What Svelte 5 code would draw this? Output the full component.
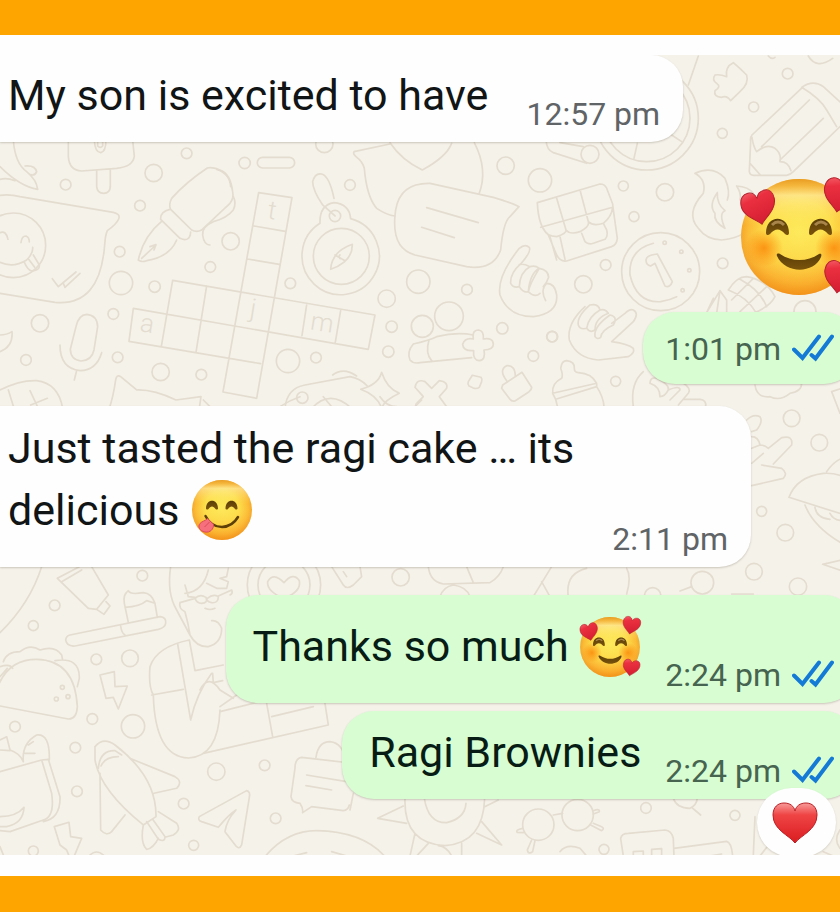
<script lang="ts">
	type Sheet = {
		x: number;
		y: number;
		dots: number[][];
		lines: string[];
	};

	// wallpaper doodles, drawn at three units per pixel
	const sheets: Sheet[] = [
		{
			x: 0,
			y: 150,
			dots: [
				[461, 69, 26], [197, 104, 16], [560, 10, 16], [420, 167, 16], [359, 305, 16],
				[363, 399, 35], [464, 410, 17], [340, 492, 16], [120, 520, 26], [78, 630, 16],
				[353, 622, 16], [482, 666, 26], [604, 674, 16], [692, 274, 26], [631, 351, 16],
				[734, 39, 17], [40, 286, 97]
			],
			lines: [
				// lolly
				'M205,-30V20Q208,62 245,63L350,55Q400,50 403,18L398,-30M290,60V110Q292,130 311,130Q330,130 331,110V58M283,-30Q285,7 302,8Q318,5 318,-30M293,-30V-12Q301,-4 308,-12V-30',
				// banana
				'M40,-30Q45,40 80,65Q110,90 113,118Q60,110 0,50M75,48Q105,45 110,65Q105,78 92,74M0,88Q20,82 45,92',
				// speech bubble with a face
				'M0,136Q30,132 60,140L340,187Q362,192 356,207Q350,222 322,242Q316,255 314,285Q300,470 165,457L0,430',
				'M0,337Q40,355 80,330Q100,310 98,292M0,248Q18,240 24,268M63,278Q65,258 78,258Q88,262 88,276M72,335Q85,365 98,363Q120,360 118,345L100,315M86,328L104,352',
				'M157,386L175,410L228,366M190,400L195,412L240,370',
				// fountain pen
				'M622,54Q560,95 515,145Q505,165 512,178L575,240Q590,248 605,240L690,160Q702,145 698,125Q692,75 665,62Q640,50 622,54Z',
				'M510,178Q480,185 482,208L540,265Q570,278 572,246M484,215Q430,260 415,330Q425,338 440,332Q510,320 530,270M425,325L468,285M450,290L468,284L462,300',
				'M650,58Q690,70 692,110M700,140Q710,160 700,180Q680,205 640,215Q605,230 608,255Q612,285 630,285',
				'M788,22H868A16,16 0 0 1 868,54H788A16,16 0 0 1 788,22Z',
				// crossword
				'M776,128L669,726L770,745L876,143ZM762,228L856,244M742,327L838,343M518,391L1125,495L1105,598L400,475L387,574L782,641M518,391L484,590M620,408L588,607M920,465L906,557M1022,482L1006,577',
				// microphone
				'M228,530Q235,495 260,493Q292,496 293,530L282,600Q275,632 243,633Q212,630 211,598ZM180,585Q180,655 240,662Q290,660 305,608M230,662L223,690',
				'M0,605Q40,590 36,545Q20,555 0,555',
				'M0,720Q60,690 110,692Q175,700 188,775M25,720L42,775M90,722L115,775M92,765L142,745',
				'M328,775Q340,740 347,690Q350,672 362,680L410,720Q460,718 528,750L603,740L598,775'
			]
		},
		{
			x: 280,
			y: 140,
			dots: [
				[133, 12, 26], [184, 349, 84], [165, 228, 17], [427, 559, 33], [507, 529, 43],
				[415, 425, 35], [320, 476, 26], [561, 449, 16], [335, 560, 17], [325, 635, 17],
				[31, 430, 16], [24, 663, 35], [108, 653, 16], [210, 135, 16], [677, 77, 26],
				[780, 121, 35], [667, 565, 17], [816, 590, 16], [760, 648, 16], [67, 773, 17]
			],
			lines: [
				// compass
				'M120,250Q118,195 162,188Q208,192 212,236M120,250A116,116 0 1 0 212,236M128,195Q98,150 98,125Q105,98 125,102Q148,108 162,175M128,195L165,228M152,388Q155,335 217,313Q218,365 152,388ZM165,345L195,362M180,345A6,6 0 0 0 184,356',
				// two speech bubbles
				'M330,12L222,35Q218,40 228,50Q248,65 253,85Q260,170 290,205Q320,225 345,228M330,8Q365,60 427,90Q500,50 515,10M583,8Q625,90 597,162',
				'M450,130Q360,128 347,210Q330,325 405,345L560,380Q640,392 662,330Q670,245 690,230L717,200Q700,190 640,172ZM440,203L595,248M425,262L523,293',
				// pointing hand
				'M722,372Q755,335 748,322Q735,310 718,325Q650,410 660,465Q685,530 760,530Q835,520 830,465Q825,430 800,430Q780,450 797,482M722,372Q690,400 692,430Q700,445 718,440Q720,395 750,380Q730,370 718,374M718,440Q730,460 745,455Q750,400 778,385Q765,375 750,380M745,455Q765,475 780,460M745,455Q750,430 778,385Q805,390 806,412Q800,430 790,440',
				'M400,612Q380,635 390,660Q400,672 420,668L575,653M400,612Q450,600 470,590Q530,575 580,585M447,600Q435,640 455,662',
				'M580,597Q575,570 596,570Q612,572 610,597Q640,592 640,613Q640,630 612,630Q618,660 598,662Q578,660 581,632Q550,634 548,613Q555,592 580,597Z',
				// camera
				'M15,805Q20,745 75,735L210,710Q240,715 262,738M158,705Q190,680 230,708M95,805Q150,745 215,805',
				'M305,697Q320,745 358,760Q315,780 305,803Q290,765 242,748Q295,735 305,697Z',
				'M430,770L405,742Q410,715 435,725L455,745L478,722Q505,725 500,745L478,770L500,800M430,770L408,792V805',
				'M577,706L603,712Q608,718 605,725L598,742Q590,748 580,744L567,738Q562,732 565,725Z',
				'M668,735L726,697L755,742Q755,750 745,757L705,783Q695,785 690,778L665,745ZM680,722Q655,690 680,677Q705,675 706,708'
			]
		},
		{
			x: 540,
			y: 50,
			dots: [
				[743, 71, 16], [641, 171, 15], [547, 250, 15], [250, 408, 15], [375, 427, 26],
				[282, 500, 15], [197, 645, 16], [130, 703, 26], [37, 860, 16], [548, 640, 16],
				[227, 994, 15], [320, 205, 155], [320, 205, 130], [150, 313, 27], [362, 665, 117],
				[795, 785, 33], [374, 578, 5], [424, 605, 5], [448, 661, 5], [428, 721, 5]
			],
			lines: [
				'M292,280L282,325M395,255L425,275M475,18L445,105M18,270Q20,300 40,308L140,340M60,278L130,290',
				// shop
				'M-8,458L180,402Q195,402 200,415L218,462L220,480L232,565Q230,585 215,590L80,633Q60,636 50,615L25,555Q-5,530 -8,458ZM2,532L218,472M50,445L78,540M120,420L145,515M10,535Q20,560 50,560Q80,550 78,540Q90,555 120,545Q150,530 145,515Q160,530 190,520Q215,500 218,472M30,560L50,630M60,560L75,628M125,550L135,575Q145,585 160,580L195,568Q205,558 200,540L190,520',
				// flame
				'M465,370Q520,345 555,385Q572,425 562,450M465,370Q500,390 490,430Q435,490 475,535Q500,570 545,570Q590,565 610,550M532,428Q530,462 555,482Q535,490 555,535Q520,515 525,490Q505,465 532,428M590,408Q625,410 640,430M590,408Q605,430 600,450',
				// jigsaw piece
				'M580,38Q600,55 620,75Q628,100 600,125L572,152Q560,135 545,142Q520,140 525,122Q545,110 530,100Q515,90 525,75Q540,72 560,80Q555,50 580,38Z',
				// pencil
				'M790,110L636,255Q630,262 632,275L628,365Q630,376 640,376H740Q750,375 760,365L905,225M785,112Q820,88 850,110L905,160M785,112Q840,145 860,180L890,230M808,150L665,290M850,205L720,330M636,262Q640,290 650,305Q680,280 705,295Q725,310 720,335Q745,335 753,362M630,340L662,376',
				// coin
				'M340,580Q265,600 270,675Q290,760 362,755Q390,750 410,740M318,630Q320,615 352,612L397,695Q390,715 375,708L345,640L332,648Q318,645 318,630Z',
				// waving hand
				'M135,770Q80,820 88,870Q110,925 175,930L265,920Q285,910 280,895Q265,882 215,875L280,815Q298,790 280,780Q270,775 255,790L215,820M115,825Q110,800 150,765Q175,760 180,780Q145,800 140,835Q120,840 115,825M140,835Q150,850 165,840Q165,805 205,790Q195,775 180,780M165,860Q160,830 210,795Q235,800 220,825Q185,840 182,862Q172,870 165,860',
				// baby bottle
				'M38,1030Q35,1000 65,985Q70,975 62,955Q65,932 80,932Q105,935 103,955Q103,968 115,968Q155,970 170,1000ZM38,1030L47,1048L170,1010V1000M47,1048L52,1068M170,1010Q190,1040 192,1070',
				'M280,1070Q270,1000 310,965M330,1000Q330,980 350,985Q390,1005 385,1020Q375,1040 360,1040Q360,1010 330,1000M385,1020Q420,1005 420,1020L390,1050M430,1000Q455,1015 445,1030L415,1065M430,1048L480,1048Q500,1050 497,1070',
				'M645,1005Q650,1045 690,1040Q720,1055 750,1030Q785,1025 785,1000M875,1025L905,1015M875,1025L900,1090',
				// pineapple
				'M565,720Q590,680 620,680Q680,690 705,740Q690,770 640,790M500,788L540,722L560,750V790M500,788L520,745M540,722L530,790M575,750L640,685M600,785L680,710M565,720Q620,740 650,790M600,688Q660,720 680,770',
				'M685,18Q695,30 705,22M805,18Q830,60 878,25'
			]
		},
		{
			x: 0,
			y: 560,
			dots: [
				[427, 47, 16], [164, 136, 16], [100, 197, 15], [289, 298, 16], [390, 295, 25],
				[399, 499, 35], [277, 477, 16], [45, 500, 16], [226, 563, 16], [231, 694, 16],
				[649, 635, 26], [794, 616, 16], [551, 731, 16], [827, 775, 16], [581, 856, 15],
				[100, 873, 15], [187, 382, 6], [169, 417, 6], [204, 410, 6], [852, 75, 110], [852, 75, 78]
			],
			lines: [
				'M125,20Q90,130 0,218',
				// tube and toothbrush
				'M172,55L238,20M172,55L265,145L290,148L325,105L275,20M185,65L245,30M290,148L312,163L330,138L318,125',
				'M210,225L480,170Q500,172 497,190Q495,203 475,208L225,258Q200,260 197,240Q198,228 210,225ZM362,198Q365,220 375,225M385,187L373,130Q368,105 385,92Q390,105 430,98Q455,100 465,130L472,172M375,142Q420,140 440,122L465,130',
				// taco
				'M-10,390Q20,298 110,298Q225,300 232,440Q230,478 205,477L0,438M10,305Q20,275 60,275Q90,250 120,270Q165,255 185,285L188,300M165,302Q240,290 238,355L232,380M0,320Q30,310 38,325M0,350L22,325',
				'M300,345L343,335L345,380L382,378L355,447L340,412L318,415Z',
				// man in a suit
				'M512,20Q500,100 530,150L570,225M555,75L565,110L585,112M555,100Q610,95 625,30M620,70L650,85H680L685,65L660,55L680,50L685,25M540,128Q535,145 555,155Q565,190 570,225Q590,262 625,260Q665,250 665,205Q655,180 635,182M540,128L585,115Q600,100 618,112Q625,130 605,130Q590,130 585,115M622,115Q640,100 655,110Q655,130 635,128Q620,125 618,112M655,108L695,90Q700,100 690,105M615,145Q630,152 645,145',
				'M568,240Q470,260 450,320Q445,380 460,405Q465,590 565,594Q655,590 660,450M455,405L550,388M533,252L572,480Q590,400 635,340M568,240L585,332L670,315M600,390Q625,340 660,390L700,415M660,440L710,405M610,580L985,495L975,430M800,430L818,530M815,470L940,440M638,340L640,368L668,362M660,455L780,425',
				'M852,115Q800,95 803,65Q820,35 852,68Q880,35 898,62Q905,95 852,115Z',
				// grocery bag
				'M0,635L125,600L155,700Q165,770 130,780L30,815L0,812M125,600L145,598L180,710Q182,775 130,785M70,605Q65,550 110,525Q150,520 148,600M75,580L105,580M85,555L100,545M0,540L20,530L30,570Q60,580 70,605M0,570L30,572M0,770Q50,770 72,742Q70,790 20,800L0,800',
				// rocket
				'M285,560Q310,530 345,555Q470,650 468,770L430,795Q300,690 285,600ZM295,625Q300,570 345,572L365,585M303,618Q315,590 355,590M395,597L525,650Q550,665 530,685L462,700M300,640L302,810Q320,830 335,815L375,765M430,795Q420,850 440,868Q460,865 475,835M440,785L475,838Q495,848 495,830L458,778M475,755L530,790Q545,810 520,825L495,832',
				'M598,770L740,692Q752,695 748,712L725,855Q718,870 708,858L675,815Q680,780 708,750Q685,765 655,802L605,785Q592,780 598,770Z',
				'M1060,610L905,592Q885,595 885,625L873,710Q875,728 900,730Q910,745 908,758L935,740L1030,752Q1045,750 1048,735M948,592Q955,545 990,545Q1030,550 1035,600M920,645L1040,665M918,677L995,690',
				'M163,800L207,787L212,830L245,835L222,890M163,800L180,855L200,870L208,890',
				'M795,890Q860,812 950,812Q1090,815 1155,890M880,888L920,878M995,875L1040,888M265,890Q290,862 315,890M0,860L12,890'
			]
		},
		{
			x: 350,
			y: 780,
			dots: [[565, 134, 47], [683, 105, 47], [888, 84, 16], [762, 208, 15], [1155, 106, 15]],
			lines: [
				// sun
				'M165,55Q160,190 285,197Q400,190 404,55M223,55Q235,130 290,128Q345,115 348,70M160,78L83,115L170,130M195,160L180,228M235,190L200,228M265,197Q290,200 305,228M335,190V228M395,125L455,195L380,160M404,80L445,60M0,90L10,40',
				'M610,105L638,100M518,145Q495,150 502,157L520,158M545,180L532,210Q535,225 548,215L555,182M730,92Q750,85 748,95L730,102M722,135L755,152Q765,145 755,140L730,130',
				'M630,215Q650,190 690,205L710,228M970,55Q980,85 1020,85Q1040,75 1042,55M1025,82L1052,105',
				'M820,228L812,175Q815,160 835,160L945,150Q965,152 970,175L972,228M850,228V215L880,213V228M905,228V208L935,206V228M972,205L1130,184Q1145,188 1148,228M1080,228L1115,222',
				'M1210,228L1215,110M1230,228L1260,190M1470,150Q1450,180 1470,205M1420,215L1450,228'
			]
		},
		{
			x: 180,
			y: 400,
			dots: [[662, 532, 26]],
			lines: [
				'M455,500L490,555Q500,570 520,555L545,530L540,500M490,515L500,530M745,500Q750,545 790,552L930,548Q960,530 970,500M860,500L880,548M780,590Q790,560 820,555Q860,560 870,590M1060,590L1115,500M1085,545L1110,590M1165,590Q1155,520 1220,505',
				'M70,0L90,20M300,20Q330,0 360,-10M430,-10L455,20M600,-10Q620,20 650,20M725,0L705,20'
			]
		},
		{
			x: 600,
			y: 390,
			dots: [
				[575, 85, 25], [658, 158, 25], [485, 364, 15], [556, 428, 25], [462, 545, 25],
				[594, 590, 26], [307, 578, 34], [158, 618, 25]
			],
			lines: [
				'M440,90Q460,70 480,80Q490,95 470,120L455,125M455,140Q475,140 480,165Q495,165 505,175L545,143Q580,135 575,165L520,222M485,225L545,235Q565,250 550,265L455,287M455,220L490,190M455,175L480,165',
				// burger
				'M567,322Q590,260 670,250Q700,248 725,258M567,322L725,372M680,245Q700,215 725,205M615,345Q640,410 725,460M645,352Q650,385 690,388M690,370Q700,390 725,392M725,510L668,523L725,542',
				'M240,603L275,590M80,535Q95,560 80,612M395,612H460'
			]
		}
	];

	const letters = [
		{ char: 't', x: 271, y: 219 },
		{ char: 'j', x: 252, y: 317 },
		{ char: 'a', x: 146, y: 332 },
		{ char: 'm', x: 321, y: 331 }
	];
</script>

{#snippet ticks()}
	<svg class="ticks" viewBox="0 0 42 28" role="img" aria-label="Read">
		<path d="M2 15.500 10.500 24 27 2.500M19.500 21 23.500 24.500 40 2.500" />
	</svg>
{/snippet}

{#snippet heart(transform: string)}
	<path
		{transform}
		d="M17 33C12 27 0 22 0 11C0 4 4 0 9 0C13 0 16 3 17 7C18 3 21 0 26 0C31 0 34 4 34 10C34 21 22 27 17 33Z"
		fill="url(#heart-red)"
		stroke="#b3202c"
		stroke-width="1"
	/>
{/snippet}

{#snippet lovedFace(size: string)}
	<svg class="emoji {size}" viewBox="0 0 120 124" role="img" aria-label="Smiling face with hearts">
		<circle cx="60" cy="62" r="58" fill="url(#face-yellow)" />
		<circle cx="60" cy="62" r="58" fill="url(#face-edge)" />
		<circle cx="25" cy="73" r="19" fill="url(#blush)" />
		<circle cx="95" cy="73" r="19" fill="url(#blush)" />
		<path
			d="M27 58C27 39 50 39 50 58C50 60 48 61 46 59C41 53 36 53 31 59C29 61 27 60 27 58ZM70 58C70 39 93 39 93 58C93 60 91 61 89 59C84 53 79 53 74 59C72 61 70 60 70 58Z"
			fill="url(#brown)"
		/>
		<path d="M33 50Q39 44 45 50M76 50Q82 44 88 50" fill="none" stroke="#a8854a" stroke-width="3" />
		<path
			d="M38 81C37 79 39 78 41 79C53 87 68 87 80 79C82 78 83 79 82 82C75 99 46 99 38 81Z"
			fill="url(#brown)"
		/>
		{@render heart('translate(0 20) rotate(-11)')}
		{@render heart('translate(88 1) rotate(12)')}
		{@render heart('translate(88 84) rotate(11) scale(0.95)')}
	</svg>
{/snippet}

<svg class="defs" aria-hidden="true">
	<defs>
		<radialGradient id="face-yellow" cx="0.5" cy="0.46" r="0.56">
			<stop offset="0" stop-color="#fdea5c" />
			<stop offset="0.5" stop-color="#fddf4a" />
			<stop offset="0.78" stop-color="#fbbb35" />
			<stop offset="1" stop-color="#ee911c" />
		</radialGradient>
		<linearGradient id="face-edge" x1="0" y1="0" x2="0" y2="1">
			<stop offset="0" stop-color="#e4961c" stop-opacity="0.8" />
			<stop offset="0.06" stop-color="#f0b040" stop-opacity="0.6" />
			<stop offset="0.14" stop-color="#fff0b0" stop-opacity="0.6" />
			<stop offset="0.4" stop-color="#ffe56a" stop-opacity="0" />
			<stop offset="1" stop-color="#f88a10" stop-opacity="0.4" />
		</linearGradient>
		<radialGradient id="blush">
			<stop offset="0" stop-color="#fb8a0c" stop-opacity="0.85" />
			<stop offset="1" stop-color="#fb8a0c" stop-opacity="0" />
		</radialGradient>
		<linearGradient id="brown" x1="0" y1="0" x2="0" y2="1">
			<stop offset="0" stop-color="#5a3d08" />
			<stop offset="1" stop-color="#7a540c" />
		</linearGradient>
		<linearGradient id="heart-red" x1="0" y1="0" x2="0.3" y2="1">
			<stop offset="0" stop-color="#f6606a" />
			<stop offset="0.3" stop-color="#ea3040" />
			<stop offset="1" stop-color="#d61f33" />
		</linearGradient>
		<linearGradient id="big-heart" x1="0" y1="0" x2="0" y2="1">
			<stop offset="0" stop-color="#f79c9a" />
			<stop offset="0.3" stop-color="#ef4444" />
			<stop offset="1" stop-color="#da1c20" />
		</linearGradient>
	</defs>
</svg>

<div class="page">
	<main class="chat">
		<svg
			class="wallpaper"
			viewBox="0 55 840 801"
			preserveAspectRatio="xMinYMin slice"
			aria-hidden="true"
		>
			{#each sheets as sheet}
				<g transform="translate({sheet.x} {sheet.y}) scale(0.3333)">
					{#each sheet.dots as [cx, cy, r]}
						<circle {cx} {cy} {r} />
					{/each}
					{#each sheet.lines as d}
						<path {d} />
					{/each}
				</g>
			{/each}
			{#each letters as letter}
				<text x={letter.x} y={letter.y} transform="rotate(9 {letter.x} {letter.y})">
					{letter.char}
				</text>
			{/each}
		</svg>

		<article class="bubble theirs">
			<p>My son is excited to have</p>
			<time>12:57 pm</time>
		</article>

		<div class="sticker">{@render lovedFace('large')}</div>

		<article class="bubble mine short">
			<time>1:01 pm</time>
			{@render ticks()}
		</article>

		<article class="bubble theirs second">
			<p class="roomy">
				Just tasted the ragi cake … its<br />delicious
				<svg class="emoji" viewBox="0 0 120 120" role="img" aria-label="Face savoring food">
					<circle cx="60" cy="60" r="60" fill="url(#face-yellow)" />
					<circle cx="60" cy="60" r="60" fill="url(#face-edge)" />
					<path
						d="M28 57C28 36 52 36 52 57C52 59 49 60 47 58C43 51 37 51 33 58C31 60 28 59 28 57ZM67 57C67 36 91 36 91 57C91 59 88 60 86 58C82 51 76 51 72 58C70 60 67 59 67 57Z"
						fill="url(#brown)"
					/>
					<path
						d="M27 72Q38 94 60 94Q81 93 92 74"
						fill="none"
						stroke="#5d3f08"
						stroke-width="5"
						stroke-linecap="round"
					/>
					<path
						d="M31 77L43 89C44 98 36 106 26 104C15 102 11 93 16 87C20 82 27 82 31 77Z"
						fill="#f5707c"
						stroke="#d94a58"
						stroke-width="2"
					/>
					<path d="M35 84L25 94" stroke="#d94a58" stroke-width="2" />
				</svg>
			</p>
			<time>2:11 pm</time>
		</article>

		<article class="bubble mine third">
			<p class="roomy">Thanks so much {@render lovedFace('small')}</p>
			<time>2:24 pm</time>
			{@render ticks()}
		</article>

		<article class="bubble mine last">
			<p>Ragi Brownies</p>
			<time>2:24 pm</time>
			{@render ticks()}
			<button class="reaction" aria-label="Red heart reaction">
				<svg viewBox="0 0 46 42" aria-hidden="true">
					<path
						d="M23 41C17 33 1 28 1 13C1 5 6 1 12 1C18 1 22 4 23 9C24 4 28 1 34 1C40 1 45 5 45 13C45 28 29 33 23 41Z"
						fill="url(#big-heart)"
						stroke="#b81f24"
						stroke-width="1"
					/>
				</svg>
			</button>
		</article>
	</main>
</div>

<style>
	:global(body) {
		margin: 0;
		background: #ffa500;
	}

	.defs {
		position: absolute;
		width: 0;
		height: 0;
	}

	.page {
		margin: 35px 0;
		padding: 20px 0 21px;
		background: #fefefe;
		font-family: Roboto, 'Noto Sans', sans-serif;
	}

	.chat {
		position: relative;
		display: flex;
		flex-direction: column;
		align-items: flex-start;
		padding-bottom: 56px;
		overflow: hidden;
		background: #f5f2ea;
	}

	.wallpaper {
		position: absolute;
		inset: 0;
		width: 100%;
		height: 100%;
		fill: none;
		stroke: #e3dccf;
		stroke-width: 5;
		stroke-linecap: round;
		stroke-linejoin: round;
	}

	.wallpaper text {
		fill: #e3dccf;
		stroke: none;
		font-size: 26px;
		font-weight: 300;
		text-anchor: middle;
	}

	.bubble {
		position: relative;
		display: flex;
		align-items: flex-end;
		padding-block: 9px 9px;
		border-radius: 32px;
		box-shadow: 0 1px 2px rgba(80, 70, 50, 0.25);
	}

	.theirs {
		gap: 38px;
		padding-inline: 8px 23px;
		border-top-left-radius: 0;
		border-bottom-left-radius: 0;
		background: #fefefe;
		color: #111516;
	}

	.mine {
		align-self: flex-end;
		margin-right: -16px;
		padding-inline: 27px 22px;
		background: #d8fdd2;
		color: #061c14;
	}

	p {
		margin: 0 0 7px;
		font-size: 43px;
		line-height: 62px;
		white-space: nowrap;
	}

	p.roomy {
		margin-bottom: 17px;
	}

	time {
		font-size: 32px;
		line-height: 38px;
		white-space: nowrap;
		color: #606466;
	}

	.mine time {
		color: #46644f;
	}

	.mine p + time {
		margin-left: 24px;
	}

	.ticks {
		width: 42px;
		height: 28px;
		margin: 0 0 6px 11px;
		fill: none;
		stroke: #147ad6;
		stroke-width: 4;
		stroke-linecap: round;
	}

	.emoji {
		width: 60px;
		height: 60px;
		margin-left: 2px;
		vertical-align: -15px;
	}

	.emoji.small {
		width: 62px;
		height: 64px;
		margin: -2px 0;
		overflow: visible;
		vertical-align: -16px;
	}

	.emoji.large {
		display: block;
		width: 120px;
		height: 124px;
		margin: 0;
	}

	.sticker {
		position: relative;
		align-self: flex-end;
		margin: 33px -19px 13px 0;
	}

	.short {
		padding-block: 18px 16px;
		padding-left: 22px;
	}

	.second {
		margin-top: 22px;
		padding-top: 11px;
	}

	.third {
		margin-top: 28px;
		padding-top: 20px;
	}

	.last {
		margin-top: 8px;
		padding-top: 10px;
	}

	.reaction {
		position: absolute;
		right: 20px;
		bottom: -58px;
		display: grid;
		place-items: center;
		width: 79px;
		height: 69px;
		padding: 0 3px 0 0;
		border: 0;
		border-radius: 40px;
		background: #fefefe;
		box-shadow: 0 1px 2px rgba(80, 70, 50, 0.2);
	}

	.reaction svg {
		width: 46px;
		height: 42px;
	}
</style>
